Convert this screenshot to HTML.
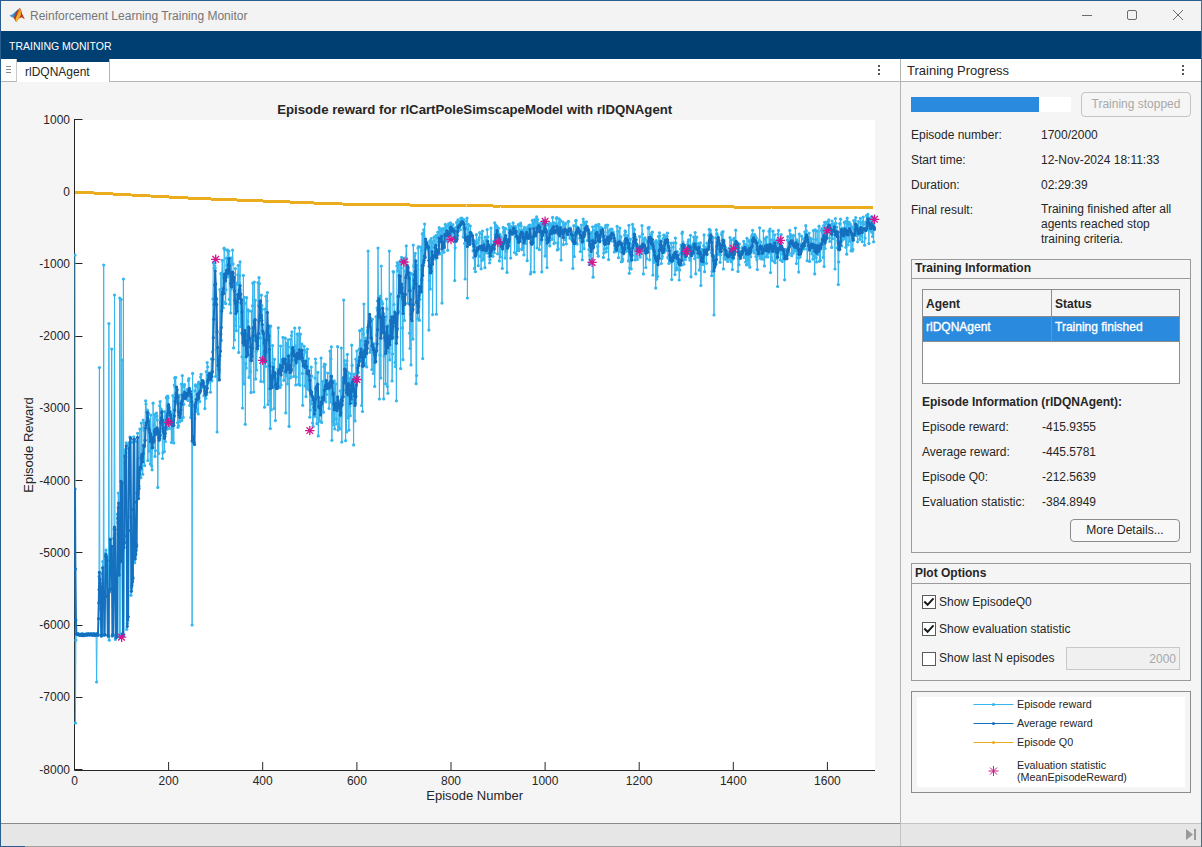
<!DOCTYPE html>
<html><head><meta charset="utf-8">
<style>
*{box-sizing:border-box;margin:0;padding:0}
html,body{width:1202px;height:847px;overflow:hidden;background:#f5f5f5;font-family:"Liberation Sans",sans-serif;color:#262626}
.a{position:absolute}
.t{position:absolute;white-space:nowrap;font-size:12px;line-height:14px}
.b{font-weight:bold}
</style></head><body>
<!-- window frame -->
<div class="a" style="left:0;top:0;width:1202px;height:847px;background:#f5f5f5"></div>
<div class="a" style="left:0;top:0;width:1201px;height:31px;background:#f3f3f3"></div>
<div class="a" style="left:0;top:0;width:1201px;height:1px;background:#2a5d8f"></div>
<div class="a" style="left:1201px;top:0;width:1px;height:847px;background:#4a6a8a"></div>
<!-- matlab icon -->
<svg class="a" style="left:5px;top:3px" width="30" height="25" viewBox="5 3 30 25">
<defs><linearGradient id="gb" x1="0" y1="1" x2="1" y2="0"><stop offset="0" stop-color="#4aa8ec"/><stop offset="1" stop-color="#1d5c9c"/></linearGradient>
<linearGradient id="go" x1="0" y1="0" x2="0" y2="1"><stop offset="0" stop-color="#e8902e"/><stop offset="1" stop-color="#f6c02a"/></linearGradient></defs>
<path d="M9.4 15.7 L13 14 L18.6 8.8 L17.5 13 L14.5 18.4 Z" fill="url(#gb)"/>
<path d="M13.8 18.3 L15.5 13.5 L19.6 7.9 L20.8 9 L22 13.5 L24.8 19.2 L21.5 17.2 L19 18.5 L16.2 21.9 Z" fill="#b8381c"/>
<path d="M19.6 7.9 L20.8 9.5 L21 15 L18.5 19 L16.2 21.9 L15.5 19 L17.5 14 Z" fill="url(#go)"/>
</svg>
<div class="t" style="left:30px;top:9px;color:#767676;font-size:12px">Reinforcement Learning Training Monitor</div>
<!-- window buttons -->
<div class="a" style="left:1082px;top:15px;width:10px;height:1px;background:#6b6b6b"></div>
<div class="a" style="left:1127px;top:10px;width:10px;height:10px;border:1px solid #6b6b6b;border-radius:2px"></div>
<svg class="a" style="left:1172px;top:9px" width="12" height="12" viewBox="0 0 12 12"><path d="M1 1L11 11M11 1L1 11" stroke="#6b6b6b" stroke-width="1"/></svg>
<!-- blue band -->
<div class="a" style="left:0;top:31px;width:1201px;height:28px;background:#003f72"></div>
<div class="t" style="left:9px;top:40px;color:#fff;font-size:10.5px;line-height:12px">TRAINING MONITOR</div>
<div class="a" style="left:0;top:0;width:1px;height:847px;background:#2a5d8f"></div>

<!-- left doc tab bar -->
<div class="a" style="left:1px;top:59px;width:899px;height:23px;background:#fff;border-bottom:1px solid #b4b4b4"></div>
<div class="a" style="left:1px;top:59px;width:16px;height:23px;background:#fff;border-right:1px solid #c8c8c8;border-bottom:1px solid #b4b4b4"></div>
<div class="a" style="left:6px;top:66px;width:5px;height:1px;background:#888"></div>
<div class="a" style="left:6px;top:69px;width:5px;height:1px;background:#888"></div>
<div class="a" style="left:6px;top:72px;width:5px;height:1px;background:#888"></div>
<div class="a" style="left:17px;top:59px;width:93px;height:23px;background:#fff;border-right:1px solid #b4b4b4"></div>
<div class="a" style="left:17px;top:59px;width:92px;height:3px;background:#003f72"></div>
<div class="t" style="left:25px;top:65px;font-size:12px">rlDQNAgent</div>
<div class="a" style="left:878px;top:65px;width:2px;height:2px;background:#555"></div>
<div class="a" style="left:878px;top:69px;width:2px;height:2px;background:#555"></div>
<div class="a" style="left:878px;top:73px;width:2px;height:2px;background:#555"></div>

<svg width="900" height="823" viewBox="0 0 900 823" style="position:absolute;left:0;top:0">
<defs>
<marker id="ml" markerUnits="userSpaceOnUse" markerWidth="6" markerHeight="6" refX="3" refY="3"><circle cx="3" cy="3" r="1.6" fill="#36b6ee"/></marker>
<marker id="md" markerUnits="userSpaceOnUse" markerWidth="6" markerHeight="6" refX="3" refY="3"><circle cx="3" cy="3" r="1.6" fill="#1570bf"/></marker>
<clipPath id="cp"><rect x="74" y="119" width="802" height="652"/></clipPath>
</defs>
<rect x="74.5" y="120" width="800.5" height="650" fill="#fff"/>

<g stroke="#262626" stroke-width="1" fill="none"><path d="M74.5 119V770.5H875"/><path d="M74.5 119.5h8" /><path d="M74.5 191.5h8" /><path d="M74.5 263.5h8" /><path d="M74.5 336.5h8" /><path d="M74.5 408.5h8" /><path d="M74.5 480.5h8" /><path d="M74.5 552.5h8" /><path d="M74.5 625.5h8" /><path d="M74.5 697.5h8" /><path d="M74.5 769.5h8" /><path d="M74.5 770v-8" /><path d="M168.6 770v-8" /><path d="M262.7 770v-8" /><path d="M356.9 770v-8" /><path d="M451.0 770v-8" /><path d="M545.1 770v-8" /><path d="M639.2 770v-8" /><path d="M733.3 770v-8" /><path d="M827.4 770v-8" /></g>
<g clip-path="url(#cp)" fill="none" stroke-linejoin="round">
<path d="M75.0 255.0 L75.4 723.0 L75.9 640.0 L76.4 634.0 L76.9 634.0 L77.3 634.4 L77.8 633.6 L78.3 635.1 L78.7 634.7 L79.2 634.7 L79.7 635.2 L80.1 635.4 L80.6 635.0 L81.1 634.2 L81.6 633.8 L82.0 634.0 L82.5 633.6 L83.0 635.4 L83.4 634.4 L83.9 634.6 L84.4 634.6 L84.9 635.6 L85.3 634.2 L85.8 635.1 L86.3 634.7 L86.7 634.4 L87.2 633.5 L87.7 635.0 L88.1 634.1 L88.6 634.3 L89.1 634.6 L89.6 634.6 L90.0 635.1 L90.5 634.2 L91.0 634.6 L91.4 634.7 L91.9 634.5 L92.4 634.9 L92.9 634.4 L93.3 635.1 L93.8 634.2 L94.3 633.8 L94.7 634.5 L95.2 635.1 L95.7 634.3 L96.1 634.2 L96.6 682.0 L97.1 634.6 L97.6 634.4 L98.0 634.7 L98.5 602.8 L99.0 576.7 L99.4 367.5 L99.9 590.4 L100.4 583.2 L100.9 635.0 L101.3 636.3 L101.8 634.8 L102.3 573.8 L102.7 561.5 L103.2 635.0 L103.7 265.0 L104.1 635.4 L104.6 634.3 L105.1 553.5 L105.6 558.8 L106.0 550.1 L106.5 563.4 L107.0 557.6 L107.4 635.0 L107.9 635.2 L108.4 637.0 L108.9 323.6 L109.3 640.2 L109.8 538.9 L110.3 540.2 L110.7 558.4 L111.2 552.1 L111.7 349.0 L112.1 636.2 L112.6 634.6 L113.1 634.9 L113.6 547.9 L114.0 529.0 L114.5 295.0 L115.0 533.9 L115.4 639.4 L115.9 636.3 L116.4 637.2 L116.9 635.7 L117.3 514.1 L117.8 522.6 L118.3 493.0 L118.7 513.0 L119.2 637.1 L119.7 298.0 L120.1 634.5 L120.6 488.7 L121.1 299.5 L121.6 499.0 L122.0 360.0 L122.5 634.8 L123.0 636.3 L123.4 279.0 L123.9 634.6 L124.4 450.4 L124.9 461.7 L125.3 465.2 L125.8 449.0 L126.3 442.8 L126.7 629.3 L127.2 623.6 L127.7 616.5 L128.1 617.0 L128.6 444.1 L129.1 452.8 L129.6 447.4 L130.0 437.0 L130.5 438.9 L131.0 595.3 L131.4 587.3 L131.9 583.7 L132.4 579.6 L132.9 577.1 L133.3 442.4 L133.8 436.8 L134.3 441.4 L134.7 562.7 L135.2 555.6 L135.7 553.4 L136.1 547.5 L136.6 544.3 L137.1 441.6 L137.6 433.3 L138.0 471.8 L138.5 486.9 L139.0 486.2 L139.4 458.7 L139.9 429.1 L140.4 470.1 L140.9 477.7 L141.3 423.0 L141.8 469.6 L142.3 456.9 L142.7 474.3 L143.2 420.0 L143.7 428.0 L144.1 430.4 L144.6 465.6 L145.1 423.1 L145.6 400.8 L146.0 404.1 L146.5 412.1 L147.0 423.7 L147.4 410.1 L147.9 460.5 L148.4 413.2 L148.9 451.2 L149.3 422.3 L149.8 438.4 L150.3 464.1 L150.7 415.1 L151.2 434.7 L151.7 466.1 L152.1 469.8 L152.6 436.1 L153.1 403.2 L153.6 442.0 L154.0 424.9 L154.5 414.4 L155.0 456.4 L155.4 450.5 L155.9 417.0 L156.4 413.2 L156.9 416.1 L157.3 420.0 L157.8 487.4 L158.3 434.9 L158.7 453.5 L159.2 429.4 L159.7 405.9 L160.1 401.6 L160.6 408.5 L161.1 409.4 L161.6 421.2 L162.0 423.3 L162.5 458.5 L163.0 452.7 L163.4 422.6 L163.9 420.9 L164.4 451.5 L164.9 411.7 L165.3 441.6 L165.8 417.3 L166.3 397.8 L166.7 396.9 L167.2 429.2 L167.7 396.1 L168.1 397.9 L168.6 410.2 L169.1 416.0 L169.6 428.3 L170.0 421.5 L170.5 417.2 L171.0 419.1 L171.4 442.5 L171.9 414.2 L172.4 439.9 L172.9 395.7 L173.3 418.1 L173.8 443.0 L174.3 385.1 L174.7 377.9 L175.2 387.1 L175.7 377.4 L176.1 392.8 L176.6 402.2 L177.1 401.2 L177.6 422.6 L178.0 427.3 L178.5 425.5 L179.0 412.1 L179.4 395.3 L179.9 421.8 L180.4 401.0 L180.9 403.0 L181.3 384.1 L181.8 420.4 L182.3 375.6 L182.7 384.9 L183.2 417.4 L183.7 404.2 L184.1 386.6 L184.6 384.7 L185.1 397.5 L185.6 398.9 L186.0 393.7 L186.5 398.3 L187.0 389.5 L187.4 393.8 L187.9 400.5 L188.4 380.6 L188.9 378.6 L189.3 388.3 L189.8 405.4 L190.3 394.5 L190.7 417.6 L191.2 396.8 L191.7 406.5 L192.1 625.0 L192.6 373.4 L193.1 414.3 L193.6 432.6 L194.0 404.2 L194.5 418.3 L195.0 390.8 L195.4 384.9 L195.9 386.3 L196.4 411.5 L196.9 409.4 L197.3 386.1 L197.8 384.5 L198.3 413.9 L198.7 382.2 L199.2 384.0 L199.7 401.7 L200.1 384.9 L200.6 377.0 L201.1 374.3 L201.6 383.5 L202.0 382.2 L202.5 381.4 L203.0 387.7 L203.4 387.1 L203.9 395.7 L204.4 386.1 L204.9 408.6 L205.3 394.5 L205.8 398.3 L206.3 371.5 L206.7 394.5 L207.2 362.6 L207.7 366.9 L208.1 382.9 L208.6 373.4 L209.1 373.3 L209.6 380.6 L210.0 373.9 L210.5 392.2 L211.0 372.4 L211.4 358.9 L211.9 380.8 L212.4 351.9 L212.9 299.1 L213.3 263.0 L213.8 262.3 L214.3 268.3 L214.7 265.5 L215.2 267.9 L215.7 376.4 L216.1 350.1 L216.6 299.1 L217.1 432.0 L217.6 360.0 L218.0 375.0 L218.5 380.0 L219.0 372.0 L219.4 360.0 L219.9 289.6 L220.4 329.5 L220.9 273.7 L221.3 340.3 L221.8 273.4 L222.3 260.3 L222.7 276.1 L223.2 307.9 L223.7 302.2 L224.1 248.2 L224.6 249.4 L225.1 273.4 L225.6 303.7 L226.0 289.8 L226.5 258.2 L227.0 265.3 L227.4 249.9 L227.9 250.9 L228.4 276.2 L228.9 251.0 L229.3 299.4 L229.8 304.2 L230.3 258.1 L230.7 313.0 L231.2 289.1 L231.7 258.0 L232.1 264.0 L232.6 250.1 L233.1 264.0 L233.6 347.9 L234.0 280.1 L234.5 340.0 L235.0 319.3 L235.4 268.5 L235.9 325.7 L236.4 330.7 L236.9 283.2 L237.3 284.3 L237.8 274.8 L238.3 265.3 L238.7 352.4 L239.2 283.0 L239.7 275.7 L240.1 261.8 L240.6 326.7 L241.1 318.4 L241.6 332.9 L242.0 356.8 L242.5 408.1 L243.0 313.6 L243.4 275.4 L243.9 383.9 L244.4 297.4 L244.9 303.4 L245.3 424.3 L245.8 363.6 L246.3 368.1 L246.7 297.7 L247.2 353.4 L247.7 321.4 L248.1 309.9 L248.6 311.2 L249.1 377.4 L249.6 356.0 L250.0 354.8 L250.5 371.5 L251.0 392.6 L251.4 311.0 L251.9 352.8 L252.4 305.8 L252.9 283.2 L253.3 320.6 L253.8 392.0 L254.3 282.0 L254.7 339.6 L255.2 300.2 L255.7 379.1 L256.1 351.6 L256.6 370.0 L257.1 349.1 L257.6 342.5 L258.0 282.5 L258.5 305.3 L259.0 277.6 L259.4 283.7 L259.9 317.8 L260.4 337.9 L260.9 381.4 L261.3 295.2 L261.8 305.7 L262.3 309.4 L262.7 357.3 L263.2 353.0 L263.7 381.8 L264.1 351.1 L264.6 407.2 L265.1 309.1 L265.6 366.5 L266.0 296.2 L266.5 309.3 L267.0 301.1 L267.4 292.5 L267.9 404.5 L268.4 352.1 L268.9 356.7 L269.3 388.8 L269.8 400.7 L270.3 428.6 L270.7 326.2 L271.2 409.9 L271.7 371.2 L272.1 386.9 L272.6 345.5 L273.1 363.1 L273.6 379.4 L274.0 408.6 L274.5 359.4 L275.0 380.2 L275.4 420.6 L275.9 374.2 L276.4 387.9 L276.9 378.6 L277.3 388.0 L277.8 369.1 L278.3 327.8 L278.7 387.6 L279.2 379.3 L279.7 364.4 L280.1 387.4 L280.6 346.1 L281.1 385.0 L281.6 361.4 L282.0 360.8 L282.5 364.6 L283.0 337.3 L283.4 358.4 L283.9 380.3 L284.4 371.3 L284.9 370.3 L285.3 338.1 L285.8 412.9 L286.3 345.2 L286.7 376.0 L287.2 343.1 L287.7 384.0 L288.1 339.8 L288.6 347.0 L289.1 426.4 L289.6 378.3 L290.0 360.8 L290.5 339.3 L291.0 377.3 L291.4 335.6 L291.9 331.9 L292.4 347.4 L292.9 355.0 L293.3 360.1 L293.8 376.3 L294.3 365.6 L294.7 328.0 L295.2 346.1 L295.7 385.0 L296.1 377.0 L296.6 349.3 L297.1 334.1 L297.6 361.3 L298.0 334.1 L298.5 384.4 L299.0 357.3 L299.4 327.8 L299.9 385.2 L300.4 334.2 L300.9 359.2 L301.3 350.5 L301.8 344.2 L302.3 373.4 L302.7 405.3 L303.2 362.9 L303.7 354.5 L304.1 346.3 L304.6 350.2 L305.1 385.9 L305.6 366.3 L306.0 396.6 L306.5 352.3 L307.0 388.6 L307.4 349.0 L307.9 386.2 L308.4 358.8 L308.9 389.8 L309.3 380.7 L309.8 417.2 L310.3 409.9 L310.7 401.3 L311.2 367.1 L311.7 376.2 L312.1 403.8 L312.6 423.0 L313.1 426.4 L313.6 398.9 L314.0 415.9 L314.5 416.4 L315.0 378.1 L315.4 359.0 L315.9 363.0 L316.4 390.5 L316.9 423.7 L317.3 396.6 L317.8 372.4 L318.3 435.9 L318.7 418.1 L319.2 398.6 L319.7 421.2 L320.1 404.1 L320.6 411.6 L321.1 358.0 L321.6 422.4 L322.0 405.9 L322.5 381.5 L323.0 411.5 L323.4 412.3 L323.9 366.7 L324.4 364.0 L324.9 398.2 L325.3 364.5 L325.8 401.8 L326.3 387.6 L326.7 394.5 L327.2 383.7 L327.7 373.0 L328.1 385.2 L328.6 383.8 L329.1 408.5 L329.6 390.0 L330.0 351.1 L330.5 402.1 L331.0 358.9 L331.4 346.8 L331.9 440.3 L332.4 397.4 L332.9 421.8 L333.3 392.9 L333.8 425.0 L334.3 380.9 L334.7 428.9 L335.2 407.8 L335.7 383.9 L336.1 419.1 L336.6 424.0 L337.1 399.7 L337.6 346.7 L338.0 430.1 L338.5 426.5 L339.0 405.4 L339.4 409.0 L339.9 428.8 L340.4 390.8 L340.9 416.1 L341.3 348.1 L341.8 442.1 L342.3 379.8 L342.7 404.5 L343.2 390.3 L343.7 300.0 L344.1 381.1 L344.6 360.6 L345.1 378.2 L345.6 440.7 L346.0 364.4 L346.5 431.9 L347.0 360.9 L347.4 354.4 L347.9 417.9 L348.4 372.7 L348.9 430.2 L349.3 378.2 L349.8 406.3 L350.3 415.7 L350.7 374.0 L351.2 389.5 L351.7 345.2 L352.1 365.4 L352.6 402.9 L353.1 400.6 L353.6 444.9 L354.0 374.2 L354.5 389.1 L355.0 420.9 L355.4 390.1 L355.9 359.2 L356.4 378.1 L356.9 351.1 L357.3 367.1 L357.8 362.2 L358.3 372.4 L358.7 362.6 L359.2 349.4 L359.7 330.7 L360.1 361.5 L360.6 340.7 L361.1 348.9 L361.6 405.5 L362.0 329.2 L362.5 411.5 L363.0 361.0 L363.4 334.1 L363.9 304.0 L364.4 363.2 L364.9 365.7 L365.3 341.6 L365.8 338.0 L366.3 345.8 L366.7 366.9 L367.2 331.9 L367.7 329.7 L368.1 251.0 L368.6 324.3 L369.1 322.2 L369.6 327.3 L370.0 352.3 L370.5 350.6 L371.0 348.8 L371.4 327.9 L371.9 369.6 L372.4 319.3 L372.9 359.7 L373.3 373.5 L373.8 343.7 L374.3 348.2 L374.7 386.4 L375.2 361.7 L375.7 354.4 L376.1 316.7 L376.6 335.3 L377.1 308.1 L377.6 300.9 L378.0 248.0 L378.5 297.2 L379.0 303.7 L379.4 399.0 L379.9 354.9 L380.4 296.2 L380.9 378.0 L381.3 266.0 L381.8 301.4 L382.3 303.5 L382.7 303.8 L383.2 329.3 L383.7 398.9 L384.1 355.9 L384.6 332.2 L385.1 320.0 L385.6 383.9 L386.0 316.9 L386.5 299.0 L387.0 308.9 L387.4 386.5 L387.9 393.3 L388.4 325.7 L388.9 352.5 L389.3 251.0 L389.8 359.9 L390.3 339.0 L390.7 294.0 L391.2 332.3 L391.7 325.0 L392.1 381.0 L392.6 354.0 L393.1 271.6 L393.6 272.0 L394.0 304.5 L394.5 311.7 L395.0 362.6 L395.4 366.6 L395.9 313.7 L396.4 400.8 L396.9 266.0 L397.3 262.6 L397.8 270.9 L398.3 264.7 L398.7 311.6 L399.2 277.1 L399.7 271.9 L400.1 261.1 L400.6 368.6 L401.1 268.1 L401.6 257.3 L402.0 299.1 L402.5 327.9 L403.0 359.7 L403.4 259.7 L403.9 261.4 L404.4 320.4 L404.9 294.2 L405.3 271.2 L405.8 257.8 L406.3 245.9 L406.7 258.8 L407.2 265.4 L407.7 303.2 L408.1 274.6 L408.6 288.7 L409.1 279.5 L409.6 333.2 L410.0 348.5 L410.5 273.2 L411.0 364.9 L411.4 314.0 L411.9 290.6 L412.4 274.2 L412.9 339.1 L413.3 245.0 L413.8 265.7 L414.3 267.2 L414.7 255.7 L415.2 253.3 L415.7 278.7 L416.1 383.7 L416.6 375.6 L417.1 265.4 L417.6 318.6 L418.0 248.0 L418.5 246.7 L419.0 319.8 L419.4 320.3 L419.9 299.3 L420.4 292.9 L420.9 247.1 L421.3 269.6 L421.8 250.3 L422.3 233.8 L422.7 358.6 L423.2 233.4 L423.7 229.9 L424.1 255.1 L424.6 224.1 L425.1 243.6 L425.6 248.8 L426.0 249.0 L426.5 247.0 L427.0 244.4 L427.4 247.8 L427.9 245.0 L428.4 249.1 L428.9 330.1 L429.3 280.7 L429.8 240.8 L430.3 289.1 L430.7 247.9 L431.2 238.5 L431.7 251.6 L432.1 242.8 L432.6 314.6 L433.1 247.5 L433.6 240.8 L434.0 237.0 L434.5 255.1 L435.0 244.3 L435.4 259.0 L435.9 235.7 L436.4 314.2 L436.9 238.1 L437.3 235.5 L437.8 232.2 L438.3 241.9 L438.7 252.6 L439.2 227.7 L439.7 254.1 L440.1 229.9 L440.6 242.0 L441.1 235.1 L441.6 229.0 L442.0 303.1 L442.5 229.9 L443.0 228.7 L443.4 229.8 L443.9 252.3 L444.4 241.3 L444.9 228.1 L445.3 224.4 L445.8 228.0 L446.3 238.7 L446.7 226.0 L447.2 241.0 L447.7 250.3 L448.1 230.4 L448.6 223.8 L449.1 226.4 L449.6 235.9 L450.0 228.3 L450.5 222.9 L451.0 225.2 L451.4 231.7 L451.9 239.6 L452.4 232.4 L452.9 224.6 L453.3 232.1 L453.8 229.0 L454.3 228.6 L454.7 280.6 L455.2 247.8 L455.7 227.7 L456.1 233.4 L456.6 222.6 L457.1 222.1 L457.6 235.8 L458.0 219.9 L458.5 230.6 L459.0 224.5 L459.4 221.8 L459.9 221.5 L460.4 229.7 L460.9 218.3 L461.3 222.1 L461.8 218.0 L462.3 222.6 L462.7 221.4 L463.2 237.1 L463.7 219.6 L464.1 227.3 L464.6 243.4 L465.1 279.0 L465.6 234.7 L466.0 227.6 L466.5 221.2 L467.0 218.2 L467.4 298.0 L467.9 229.7 L468.4 224.4 L468.9 233.4 L469.3 240.6 L469.8 240.6 L470.3 226.0 L470.7 232.5 L471.2 233.5 L471.7 242.7 L472.1 236.9 L472.6 243.0 L473.1 250.7 L473.6 257.6 L474.0 246.8 L474.5 268.4 L475.0 241.4 L475.4 271.7 L475.9 243.9 L476.4 234.7 L476.9 242.5 L477.3 252.8 L477.8 250.8 L478.3 265.7 L478.7 239.8 L479.2 237.6 L479.7 232.7 L480.1 256.4 L480.6 247.6 L481.1 268.8 L481.6 234.1 L482.0 260.4 L482.5 231.0 L483.0 241.6 L483.4 259.4 L483.9 243.1 L484.4 252.8 L484.9 267.7 L485.3 237.2 L485.8 239.9 L486.3 252.7 L486.7 250.8 L487.2 229.6 L487.7 236.9 L488.1 253.2 L488.6 250.9 L489.1 256.5 L489.6 262.8 L490.0 259.5 L490.5 252.1 L491.0 228.0 L491.4 244.2 L491.9 249.2 L492.4 247.4 L492.9 256.3 L493.3 247.6 L493.8 241.2 L494.3 252.7 L494.7 222.9 L495.2 234.8 L495.7 225.1 L496.1 232.0 L496.6 242.8 L497.1 226.7 L497.6 253.9 L498.0 231.9 L498.5 228.3 L499.0 242.3 L499.4 260.9 L499.9 234.3 L500.4 257.0 L500.9 236.9 L501.3 246.2 L501.8 241.7 L502.3 268.4 L502.7 243.4 L503.2 227.4 L503.7 232.2 L504.1 238.5 L504.6 228.5 L505.1 258.1 L505.6 228.6 L506.0 251.3 L506.5 240.1 L507.0 272.4 L507.4 239.4 L507.9 246.7 L508.4 224.4 L508.9 229.6 L509.3 224.1 L509.8 231.9 L510.3 227.1 L510.7 258.1 L511.2 226.5 L511.7 227.6 L512.1 233.2 L512.6 231.3 L513.1 222.9 L513.6 227.7 L514.0 228.0 L514.5 252.5 L515.0 226.3 L515.4 229.3 L515.9 227.1 L516.4 254.3 L516.9 231.5 L517.3 250.1 L517.8 242.6 L518.3 224.7 L518.7 250.7 L519.2 248.8 L519.7 230.4 L520.1 225.6 L520.6 223.0 L521.1 225.7 L521.6 239.7 L522.0 249.7 L522.5 237.2 L523.0 247.6 L523.4 229.7 L523.9 254.9 L524.4 227.4 L524.9 234.6 L525.3 228.5 L525.8 229.6 L526.3 243.5 L526.7 230.2 L527.2 260.7 L527.7 227.0 L528.1 238.2 L528.6 228.9 L529.1 225.4 L529.6 229.3 L530.0 225.2 L530.5 274.0 L531.0 272.0 L531.4 237.3 L531.9 227.5 L532.4 220.4 L532.9 224.1 L533.3 239.2 L533.8 222.2 L534.3 272.1 L534.7 219.7 L535.2 226.3 L535.7 235.6 L536.1 222.2 L536.6 216.8 L537.1 248.0 L537.6 219.7 L538.0 224.4 L538.5 223.5 L539.0 224.2 L539.4 249.7 L539.9 224.1 L540.4 244.0 L540.9 225.4 L541.3 223.6 L541.8 271.9 L542.3 222.2 L542.7 224.9 L543.2 221.5 L543.7 229.9 L544.1 221.0 L544.6 222.0 L545.1 256.1 L545.6 223.7 L546.0 225.6 L546.5 243.9 L547.0 267.6 L547.4 240.9 L547.9 236.5 L548.4 231.3 L548.9 225.8 L549.3 223.7 L549.8 245.9 L550.3 240.0 L550.7 223.9 L551.2 224.1 L551.7 226.6 L552.1 239.3 L552.6 217.4 L553.1 231.3 L553.6 222.5 L554.0 243.6 L554.5 242.8 L555.0 230.6 L555.4 223.6 L555.9 225.2 L556.4 218.4 L556.9 217.7 L557.3 250.0 L557.8 242.9 L558.3 249.1 L558.7 223.7 L559.2 218.8 L559.7 231.9 L560.1 221.5 L560.6 220.5 L561.1 260.0 L561.6 232.3 L562.0 232.7 L562.5 233.9 L563.0 222.1 L563.4 244.7 L563.9 225.1 L564.4 225.4 L564.9 223.8 L565.3 239.8 L565.8 223.6 L566.3 243.8 L566.7 232.6 L567.2 234.6 L567.7 232.0 L568.1 221.5 L568.6 221.6 L569.1 231.1 L569.6 235.3 L570.0 238.2 L570.5 228.0 L571.0 232.2 L571.4 239.0 L571.9 236.3 L572.4 240.3 L572.9 268.4 L573.3 234.9 L573.8 225.7 L574.3 256.5 L574.7 233.2 L575.2 237.5 L575.7 221.0 L576.1 220.4 L576.6 226.6 L577.1 244.1 L577.6 228.2 L578.0 227.6 L578.5 233.8 L579.0 230.7 L579.4 228.9 L579.9 238.3 L580.4 251.5 L580.9 240.4 L581.3 225.1 L581.8 237.5 L582.3 259.8 L582.7 233.2 L583.2 219.0 L583.7 221.8 L584.1 248.7 L584.6 224.0 L585.1 224.2 L585.6 231.5 L586.0 228.9 L586.5 221.8 L587.0 227.6 L587.4 240.5 L587.9 228.8 L588.4 234.1 L588.9 249.7 L589.3 264.5 L589.8 255.5 L590.3 232.9 L590.7 246.6 L591.2 259.9 L591.7 232.5 L592.1 245.2 L592.6 226.8 L593.1 277.2 L593.6 241.0 L594.0 230.0 L594.5 238.5 L595.0 240.5 L595.4 226.8 L595.9 225.2 L596.4 237.0 L596.9 225.8 L597.3 253.1 L597.8 246.4 L598.3 256.2 L598.7 224.3 L599.2 230.3 L599.7 240.3 L600.1 227.1 L600.6 229.8 L601.1 234.0 L601.6 227.9 L602.0 228.9 L602.5 230.5 L603.0 241.0 L603.4 257.4 L603.9 253.0 L604.4 249.1 L604.9 235.6 L605.3 227.5 L605.8 225.3 L606.3 251.8 L606.7 248.2 L607.2 243.8 L607.7 225.0 L608.1 232.2 L608.6 259.6 L609.1 235.4 L609.6 236.1 L610.0 230.2 L610.5 229.4 L611.0 240.9 L611.4 234.3 L611.9 229.2 L612.4 237.9 L612.9 234.7 L613.3 232.1 L613.8 241.5 L614.3 252.0 L614.7 245.4 L615.2 250.1 L615.7 251.4 L616.1 250.0 L616.6 250.9 L617.1 226.4 L617.6 246.2 L618.0 231.2 L618.5 257.7 L619.0 249.6 L619.4 240.3 L619.9 228.0 L620.4 251.6 L620.9 236.7 L621.3 261.8 L621.8 244.2 L622.3 261.4 L622.7 259.4 L623.2 251.4 L623.7 243.3 L624.1 241.6 L624.6 234.9 L625.1 230.9 L625.6 232.0 L626.0 251.5 L626.5 240.3 L627.0 250.2 L627.4 235.5 L627.9 247.4 L628.4 260.9 L628.9 225.3 L629.3 273.3 L629.8 268.0 L630.3 239.2 L630.7 261.1 L631.2 268.9 L631.7 250.2 L632.1 244.3 L632.6 224.4 L633.1 227.9 L633.6 234.6 L634.0 244.3 L634.5 229.6 L635.0 259.9 L635.4 241.4 L635.9 249.6 L636.4 239.7 L636.9 256.1 L637.3 259.5 L637.8 248.3 L638.3 247.1 L638.7 245.5 L639.2 247.4 L639.7 236.7 L640.1 257.2 L640.6 254.1 L641.1 247.2 L641.6 251.1 L642.0 225.5 L642.5 234.2 L643.0 250.8 L643.4 273.9 L643.9 239.3 L644.4 247.9 L644.9 237.8 L645.3 252.5 L645.8 267.5 L646.3 251.6 L646.7 258.7 L647.2 240.2 L647.7 242.8 L648.1 227.9 L648.6 228.5 L649.1 227.4 L649.6 259.8 L650.0 246.7 L650.5 234.9 L651.0 242.6 L651.4 248.5 L651.9 232.6 L652.4 232.1 L652.9 275.1 L653.3 247.1 L653.8 262.4 L654.3 259.2 L654.7 255.7 L655.2 242.2 L655.7 288.1 L656.1 240.7 L656.6 279.2 L657.1 242.5 L657.6 276.5 L658.0 261.2 L658.5 236.3 L659.0 254.6 L659.4 232.8 L659.9 236.0 L660.4 245.6 L660.9 242.1 L661.3 263.5 L661.8 258.5 L662.3 256.4 L662.7 250.5 L663.2 238.7 L663.7 235.1 L664.1 252.6 L664.6 235.4 L665.1 241.6 L665.6 236.9 L666.0 250.5 L666.5 239.5 L667.0 236.4 L667.4 233.2 L667.9 257.5 L668.4 258.2 L668.9 263.5 L669.3 256.2 L669.8 262.3 L670.3 261.9 L670.7 259.9 L671.2 243.2 L671.7 279.6 L672.1 260.8 L672.6 256.6 L673.1 247.1 L673.6 242.8 L674.0 259.0 L674.5 254.7 L675.0 274.6 L675.4 238.1 L675.9 243.0 L676.4 270.0 L676.9 267.9 L677.3 251.7 L677.8 261.4 L678.3 261.2 L678.7 262.9 L679.2 280.0 L679.7 269.9 L680.1 253.8 L680.6 248.9 L681.1 245.0 L681.6 265.1 L682.0 233.4 L682.5 232.0 L683.0 242.1 L683.4 252.1 L683.9 264.3 L684.4 248.6 L684.9 259.4 L685.3 259.4 L685.8 254.3 L686.3 250.3 L686.7 251.3 L687.2 248.8 L687.7 244.4 L688.1 241.8 L688.6 239.9 L689.1 249.6 L689.6 258.1 L690.0 260.2 L690.5 235.3 L691.0 276.8 L691.4 254.0 L691.9 245.9 L692.4 246.0 L692.9 252.0 L693.3 243.7 L693.8 237.1 L694.3 240.7 L694.7 258.7 L695.2 232.5 L695.7 273.9 L696.1 248.6 L696.6 237.2 L697.1 246.5 L697.6 254.1 L698.0 257.3 L698.5 243.6 L699.0 243.7 L699.4 270.2 L699.9 257.1 L700.4 242.8 L700.9 285.5 L701.3 264.1 L701.8 249.4 L702.3 256.4 L702.7 250.0 L703.2 264.6 L703.7 245.7 L704.1 234.9 L704.6 271.7 L705.1 247.3 L705.6 249.1 L706.0 251.6 L706.5 263.3 L707.0 243.3 L707.4 243.1 L707.9 247.4 L708.4 248.0 L708.9 235.4 L709.3 229.3 L709.8 234.2 L710.3 230.4 L710.7 233.5 L711.2 252.8 L711.7 275.7 L712.1 271.4 L712.6 269.9 L713.1 237.6 L713.6 255.6 L714.0 315.0 L714.5 256.3 L715.0 262.2 L715.4 256.7 L715.9 237.8 L716.4 229.8 L716.9 233.6 L717.3 234.8 L717.8 240.3 L718.3 248.3 L718.7 254.3 L719.2 245.8 L719.7 244.4 L720.1 262.3 L720.6 254.8 L721.1 245.6 L721.6 234.6 L722.0 232.4 L722.5 242.6 L723.0 231.7 L723.4 268.9 L723.9 240.1 L724.4 258.4 L724.9 254.8 L725.3 247.3 L725.8 259.5 L726.3 250.2 L726.7 257.6 L727.2 258.9 L727.7 261.4 L728.1 254.9 L728.6 256.6 L729.1 248.3 L729.6 253.1 L730.0 237.5 L730.5 259.4 L731.0 261.7 L731.4 240.1 L731.9 259.4 L732.4 269.5 L732.9 255.9 L733.3 258.8 L733.8 238.7 L734.3 244.0 L734.7 238.0 L735.2 252.4 L735.7 230.2 L736.1 245.2 L736.6 248.3 L737.1 246.5 L737.6 243.0 L738.0 271.4 L738.5 259.1 L739.0 264.8 L739.4 244.1 L739.9 256.2 L740.4 254.3 L740.9 255.3 L741.3 251.7 L741.8 248.0 L742.3 254.7 L742.7 247.2 L743.2 247.6 L743.7 241.4 L744.1 257.6 L744.6 246.3 L745.1 244.4 L745.6 262.0 L746.0 249.4 L746.5 264.9 L747.0 238.3 L747.4 261.0 L747.9 246.1 L748.4 264.3 L748.9 240.8 L749.3 240.8 L749.8 267.2 L750.3 241.5 L750.7 256.7 L751.2 239.4 L751.7 236.9 L752.1 234.9 L752.6 230.3 L753.1 250.6 L753.6 235.6 L754.0 252.9 L754.5 234.3 L755.0 237.0 L755.4 236.0 L755.9 256.7 L756.4 238.0 L756.9 259.6 L757.3 269.6 L757.8 242.7 L758.3 255.5 L758.7 253.2 L759.2 240.3 L759.7 227.8 L760.1 258.1 L760.6 242.2 L761.1 256.0 L761.6 259.1 L762.0 256.4 L762.5 248.6 L763.0 245.3 L763.4 230.8 L763.9 259.1 L764.4 265.9 L764.9 238.9 L765.3 238.7 L765.8 244.6 L766.3 256.7 L766.7 237.0 L767.2 254.2 L767.7 256.9 L768.1 250.5 L768.6 253.0 L769.1 231.3 L769.6 244.9 L770.0 229.1 L770.5 272.6 L771.0 239.9 L771.4 257.4 L771.9 260.3 L772.4 246.3 L772.9 231.2 L773.3 244.6 L773.8 240.3 L774.3 261.7 L774.7 234.8 L775.2 262.7 L775.7 254.5 L776.1 241.4 L776.6 258.3 L777.1 239.8 L777.6 286.5 L778.0 234.1 L778.5 230.4 L779.0 250.0 L779.4 247.9 L779.9 244.2 L780.4 260.0 L780.9 243.9 L781.3 234.5 L781.8 248.1 L782.3 261.4 L782.7 254.2 L783.2 252.4 L783.7 251.2 L784.1 254.1 L784.6 279.8 L785.1 250.3 L785.6 249.4 L786.0 257.6 L786.5 259.0 L787.0 255.1 L787.4 240.0 L787.9 236.5 L788.4 254.8 L788.9 241.3 L789.3 253.2 L789.8 230.4 L790.3 242.2 L790.7 234.6 L791.2 245.6 L791.7 255.7 L792.1 236.4 L792.6 243.8 L793.1 253.2 L793.6 235.4 L794.0 250.7 L794.5 248.6 L795.0 251.0 L795.4 228.0 L795.9 242.3 L796.4 263.5 L796.9 239.9 L797.3 251.1 L797.8 241.5 L798.3 257.9 L798.7 272.1 L799.2 234.0 L799.7 254.4 L800.1 257.1 L800.6 249.1 L801.1 244.3 L801.6 236.2 L802.0 250.1 L802.5 244.8 L803.0 247.1 L803.4 238.9 L803.9 245.5 L804.4 248.9 L804.9 231.8 L805.3 234.1 L805.8 225.7 L806.3 230.9 L806.7 237.4 L807.2 260.7 L807.7 248.6 L808.1 249.6 L808.6 246.5 L809.1 233.1 L809.6 261.4 L810.0 250.5 L810.5 238.2 L811.0 241.9 L811.4 239.2 L811.9 253.9 L812.4 245.3 L812.9 259.1 L813.3 230.6 L813.8 243.3 L814.3 255.8 L814.7 273.9 L815.2 229.9 L815.7 239.3 L816.1 257.8 L816.6 262.0 L817.1 231.1 L817.6 254.4 L818.0 251.8 L818.5 250.9 L819.0 226.2 L819.4 261.3 L819.9 243.6 L820.4 260.3 L820.9 243.4 L821.3 230.5 L821.8 228.7 L822.3 232.5 L822.7 238.3 L823.2 257.4 L823.7 225.7 L824.1 266.5 L824.6 222.3 L825.1 248.5 L825.6 222.4 L826.0 236.3 L826.5 235.9 L827.0 227.8 L827.4 221.9 L827.9 224.2 L828.4 221.6 L828.9 219.8 L829.3 238.0 L829.8 241.5 L830.3 225.7 L830.7 228.9 L831.2 224.5 L831.7 247.4 L832.1 221.0 L832.6 238.7 L833.1 224.5 L833.6 227.8 L834.0 225.8 L834.5 223.5 L835.0 269.0 L835.4 218.5 L835.9 223.3 L836.4 234.3 L836.9 227.0 L837.3 247.8 L837.8 240.5 L838.3 284.6 L838.7 261.9 L839.2 236.8 L839.7 223.5 L840.1 224.0 L840.6 219.2 L841.1 229.0 L841.6 245.9 L842.0 240.8 L842.5 228.3 L843.0 239.4 L843.4 228.6 L843.9 232.1 L844.4 222.2 L844.9 222.8 L845.3 238.3 L845.8 247.3 L846.3 221.3 L846.7 254.2 L847.2 218.2 L847.7 223.7 L848.1 244.8 L848.6 222.0 L849.1 222.4 L849.6 241.4 L850.0 231.8 L850.5 224.4 L851.0 250.8 L851.4 229.0 L851.9 226.8 L852.4 250.9 L852.9 249.4 L853.3 234.6 L853.8 220.6 L854.3 221.9 L854.7 230.1 L855.2 220.5 L855.7 217.5 L856.1 235.4 L856.6 232.3 L857.1 234.7 L857.6 241.8 L858.0 235.2 L858.5 221.5 L859.0 233.0 L859.4 228.3 L859.9 239.3 L860.4 218.4 L860.9 223.3 L861.3 235.9 L861.8 236.0 L862.3 241.7 L862.7 221.7 L863.2 217.1 L863.7 224.5 L864.1 229.7 L864.6 245.2 L865.1 238.0 L865.6 222.1 L866.0 223.9 L866.5 215.6 L867.0 221.3 L867.4 216.3 L867.9 214.4 L868.4 224.3 L868.9 243.6 L869.3 224.8 L869.8 228.9 L870.3 218.1 L870.7 231.0 L871.2 224.0 L871.7 216.5 L872.1 232.4 L872.6 236.6 L873.1 217.3 L873.6 241.8 L874.0 219.9 L874.5 227.6" stroke="#36b6ee" stroke-width="1" marker-start="url(#ml)" marker-mid="url(#ml)" marker-end="url(#ml)"/>
<path d="M75.0 489.0 L75.4 569.0 L75.9 620.0 L76.4 634.0 L76.9 634.0 L77.3 634.5 L77.8 634.1 L78.3 634.3 L78.7 634.0 L79.2 634.4 L79.7 634.5 L80.1 635.1 L80.6 635.1 L81.1 634.8 L81.6 634.9 L82.0 634.6 L82.5 635.6 L83.0 635.1 L83.4 635.6 L83.9 634.7 L84.4 634.7 L84.9 634.9 L85.3 634.6 L85.8 634.6 L86.3 634.1 L86.7 634.9 L87.2 634.6 L87.7 634.8 L88.1 634.4 L88.6 633.8 L89.1 634.7 L89.6 635.0 L90.0 634.0 L90.5 634.1 L91.0 634.4 L91.4 634.4 L91.9 633.8 L92.4 635.2 L92.9 634.9 L93.3 634.3 L93.8 633.8 L94.3 634.6 L94.7 635.3 L95.2 634.8 L95.7 635.0 L96.1 634.1 L96.6 634.6 L97.1 633.9 L97.6 635.3 L98.0 634.7 L98.5 618.7 L99.0 589.8 L99.4 572.3 L99.9 579.2 L100.4 586.8 L100.9 609.1 L101.3 635.6 L101.8 635.6 L102.3 604.3 L102.7 567.7 L103.2 598.3 L103.7 592.5 L104.1 592.7 L104.6 634.8 L105.1 593.9 L105.6 556.1 L106.0 554.4 L106.5 556.7 L107.0 560.5 L107.4 596.3 L107.9 635.1 L108.4 636.1 L108.9 590.5 L109.3 592.0 L109.8 589.6 L110.3 539.6 L110.7 549.3 L111.2 555.3 L111.7 546.3 L112.1 588.4 L112.6 635.4 L113.1 634.7 L113.6 591.4 L114.0 538.5 L114.5 527.0 L115.0 529.5 L115.4 586.7 L115.9 637.8 L116.4 636.8 L116.9 636.5 L117.3 574.9 L117.8 518.4 L118.3 507.8 L118.7 503.0 L119.2 575.1 L119.7 561.6 L120.1 560.2 L120.6 561.6 L121.1 481.4 L121.6 486.5 L122.0 483.2 L122.5 551.2 L123.0 635.6 L123.4 548.2 L123.9 547.3 L124.4 542.5 L124.9 456.0 L125.3 463.4 L125.8 457.1 L126.3 445.9 L126.7 536.0 L127.2 626.4 L127.7 620.0 L128.1 616.8 L128.6 530.5 L129.1 448.4 L129.6 450.1 L130.0 442.2 L130.5 437.9 L131.0 517.1 L131.4 591.3 L131.9 585.5 L132.4 581.7 L132.9 578.3 L133.3 509.7 L133.8 439.6 L134.3 439.1 L134.7 502.1 L135.2 559.1 L135.7 554.5 L136.1 550.4 L136.6 545.9 L137.1 492.9 L137.6 437.4 L138.0 494.0 L138.5 498.6 L139.0 488.5 L139.4 473.5 L139.9 467.9 L140.4 467.1 L140.9 468.1 L141.3 457.5 L141.8 454.7 L142.3 454.4 L142.7 461.9 L143.2 453.6 L143.7 445.3 L144.1 446.5 L144.6 445.9 L145.1 440.2 L145.6 428.0 L146.0 425.3 L146.5 422.7 L147.0 421.6 L147.4 412.3 L147.9 418.6 L148.4 420.6 L148.9 428.5 L149.3 430.2 L149.8 432.6 L150.3 441.6 L150.7 434.1 L151.2 437.6 L151.7 440.1 L152.1 448.0 L152.6 447.6 L153.1 437.5 L153.6 442.0 L154.0 440.4 L154.5 431.7 L155.0 429.5 L155.4 431.9 L155.9 434.2 L156.4 429.4 L156.9 427.9 L157.3 428.9 L157.8 434.0 L158.3 431.4 L158.7 437.5 L159.2 440.2 L159.7 438.5 L160.1 435.4 L160.6 422.3 L161.1 418.0 L161.6 412.7 L162.0 411.7 L162.5 420.4 L163.0 428.9 L163.4 431.3 L163.9 433.2 L164.4 438.3 L164.9 436.3 L165.3 433.5 L165.8 427.6 L166.3 423.5 L166.7 419.5 L167.2 415.7 L167.7 413.1 L168.1 405.9 L168.6 404.7 L169.1 407.7 L169.6 412.9 L170.0 411.6 L170.5 415.2 L171.0 418.7 L171.4 424.1 L171.9 423.8 L172.4 425.7 L172.9 421.4 L173.3 421.6 L173.8 425.6 L174.3 416.0 L174.7 410.0 L175.2 401.2 L175.7 398.1 L176.1 393.9 L176.6 387.1 L177.1 389.8 L177.6 397.2 L178.0 403.9 L178.5 411.9 L179.0 415.2 L179.4 414.0 L179.9 417.4 L180.4 413.8 L180.9 409.8 L181.3 402.9 L181.8 404.3 L182.3 401.0 L182.7 394.8 L183.2 397.6 L183.7 397.8 L184.1 398.2 L184.6 392.2 L185.1 395.9 L185.6 398.2 L186.0 394.3 L186.5 393.3 L187.0 393.8 L187.4 395.3 L187.9 395.8 L188.4 392.7 L188.9 390.2 L189.3 388.6 L189.8 391.2 L190.3 391.3 L190.7 394.2 L191.2 396.9 L191.7 401.5 L192.1 441.0 L192.6 435.6 L193.1 438.9 L193.6 441.5 L194.0 442.7 L194.5 444.6 L195.0 405.6 L195.4 407.5 L195.9 402.9 L196.4 399.3 L196.9 400.2 L197.3 394.8 L197.8 393.8 L198.3 398.6 L198.7 397.9 L199.2 393.3 L199.7 392.1 L200.1 391.9 L200.6 390.6 L201.1 384.0 L201.6 384.2 L202.0 383.9 L202.5 380.6 L203.0 381.0 L203.4 382.7 L203.9 386.3 L204.4 386.7 L204.9 391.1 L205.3 393.3 L205.8 395.1 L206.3 392.5 L206.7 392.3 L207.2 388.3 L207.7 381.4 L208.1 379.5 L208.6 375.3 L209.1 375.6 L209.6 373.3 L210.0 375.2 L210.5 379.4 L211.0 377.6 L211.4 375.2 L211.9 376.5 L212.4 371.7 L212.9 359.2 L213.3 337.7 L213.8 319.3 L214.3 304.2 L214.7 285.0 L215.2 271.0 L215.7 283.9 L216.1 298.4 L216.6 304.6 L217.1 331.8 L217.6 347.6 L218.0 365.4 L218.5 366.0 L219.0 369.7 L219.4 379.8 L219.9 356.1 L220.4 351.0 L220.9 334.1 L221.3 327.5 L221.8 311.1 L222.3 294.5 L222.7 292.2 L223.2 288.6 L223.7 293.4 L224.1 278.1 L224.6 274.1 L225.1 276.2 L225.6 280.8 L226.0 277.8 L226.5 270.4 L227.0 273.3 L227.4 273.4 L227.9 269.6 L228.4 265.0 L228.9 258.6 L229.3 265.4 L229.8 271.9 L230.3 273.3 L230.7 283.6 L231.2 285.8 L231.7 287.0 L232.1 281.1 L232.6 272.0 L233.1 273.0 L233.6 278.8 L234.0 277.3 L234.5 291.0 L235.0 300.2 L235.4 303.3 L235.9 313.6 L236.4 310.7 L236.9 311.2 L237.3 301.9 L237.8 294.5 L238.3 294.0 L238.7 298.4 L239.2 290.5 L239.7 289.2 L240.1 285.5 L240.6 294.2 L241.1 303.0 L241.6 299.8 L242.0 312.0 L242.5 334.1 L243.0 342.7 L243.4 334.2 L243.9 345.1 L244.4 339.2 L244.9 330.3 L245.3 333.0 L245.8 341.3 L246.3 356.8 L246.7 342.4 L247.2 351.7 L247.7 354.7 L248.1 335.7 L248.6 326.9 L249.1 328.5 L249.6 338.2 L250.0 338.5 L250.5 346.8 L251.0 360.6 L251.4 360.6 L251.9 356.4 L252.4 348.1 L252.9 336.1 L253.3 327.7 L253.8 327.6 L254.3 322.7 L254.7 320.5 L255.2 319.6 L255.7 335.6 L256.1 340.7 L256.6 337.1 L257.1 348.3 L257.6 348.7 L258.0 345.8 L258.5 333.5 L259.0 321.1 L259.4 306.8 L259.9 301.6 L260.4 300.8 L260.9 317.3 L261.3 315.6 L261.8 320.3 L262.3 324.6 L262.7 331.2 L263.2 333.7 L263.7 333.7 L264.1 343.0 L264.6 360.0 L265.1 359.9 L265.6 361.5 L266.0 352.0 L266.5 339.9 L267.0 331.6 L267.4 312.4 L267.9 328.3 L268.4 325.9 L268.9 336.0 L269.3 349.3 L269.8 365.9 L270.3 388.6 L270.7 375.5 L271.2 385.1 L271.7 387.6 L272.1 387.3 L272.6 378.1 L273.1 367.1 L273.6 376.0 L274.0 375.8 L274.5 373.8 L275.0 372.7 L275.4 385.2 L275.9 387.1 L276.4 388.5 L276.9 383.5 L277.3 388.3 L277.8 386.4 L278.3 370.9 L278.7 373.2 L279.2 371.7 L279.7 369.4 L280.1 369.3 L280.6 365.5 L281.1 375.0 L281.6 370.6 L282.0 367.5 L282.5 367.5 L283.0 359.2 L283.4 361.2 L283.9 360.5 L284.4 362.1 L284.9 363.7 L285.3 359.3 L285.8 371.9 L286.3 369.7 L286.7 369.0 L287.2 364.3 L287.7 366.6 L288.1 366.8 L288.6 355.9 L289.1 369.4 L289.6 369.8 L290.0 372.7 L290.5 365.3 L291.0 371.5 L291.4 369.6 L291.9 353.9 L292.4 348.7 L292.9 347.7 L293.3 351.2 L293.8 351.1 L294.3 356.1 L294.7 355.4 L295.2 355.2 L295.7 360.2 L296.1 363.0 L296.6 358.5 L297.1 353.3 L297.6 358.8 L298.0 356.8 L298.5 356.7 L299.0 353.4 L299.4 349.8 L299.9 358.3 L300.4 353.8 L300.9 358.0 L301.3 352.3 L301.8 350.2 L302.3 357.8 L302.7 361.1 L303.2 365.9 L303.7 365.1 L304.1 364.5 L304.6 365.5 L305.1 367.5 L305.6 361.0 L306.0 366.6 L306.5 366.3 L307.0 373.3 L307.4 373.1 L307.9 373.2 L308.4 371.9 L308.9 370.8 L309.3 375.5 L309.8 380.3 L310.3 390.4 L310.7 392.9 L311.2 394.3 L311.7 392.1 L312.1 395.9 L312.6 396.9 L313.1 399.6 L313.6 399.2 L314.0 407.4 L314.5 414.1 L315.0 409.8 L315.4 399.1 L315.9 388.5 L316.4 387.1 L316.9 388.4 L317.3 385.2 L317.8 384.2 L318.3 397.0 L318.7 406.2 L319.2 407.6 L319.7 407.1 L320.1 408.4 L320.6 414.9 L321.1 401.9 L321.6 402.6 L322.0 403.8 L322.5 397.2 L323.0 398.5 L323.4 398.6 L323.9 400.0 L324.4 390.3 L324.9 389.0 L325.3 386.2 L325.8 384.6 L326.3 380.5 L326.7 385.1 L327.2 388.4 L327.7 384.2 L328.1 387.6 L328.6 384.6 L329.1 388.1 L329.6 387.4 L330.0 381.9 L330.5 386.8 L331.0 382.4 L331.4 376.2 L331.9 381.5 L332.4 382.8 L332.9 394.6 L333.3 393.0 L333.8 404.0 L334.3 409.7 L334.7 407.8 L335.2 409.6 L335.7 403.2 L336.1 407.6 L336.6 407.4 L337.1 410.6 L337.6 396.9 L338.0 400.6 L338.5 407.7 L339.0 405.4 L339.4 402.9 L339.9 407.8 L340.4 415.1 L340.9 412.8 L341.3 399.7 L341.8 405.8 L342.3 400.9 L342.7 396.9 L343.2 396.8 L343.7 377.4 L344.1 382.9 L344.6 369.4 L345.1 369.1 L345.6 375.1 L346.0 370.8 L346.5 392.8 L347.0 389.4 L347.4 388.4 L347.9 395.0 L348.4 383.7 L348.9 394.7 L349.3 385.7 L349.8 393.3 L350.3 403.5 L350.7 396.2 L351.2 399.0 L351.7 384.8 L352.1 382.7 L352.6 382.1 L353.1 379.6 L353.6 391.4 L354.0 388.9 L354.5 396.2 L355.0 405.4 L355.4 403.3 L355.9 396.4 L356.4 385.3 L356.9 381.4 L357.3 377.7 L357.8 368.0 L358.3 365.0 L358.7 365.6 L359.2 360.8 L359.7 357.4 L360.1 356.5 L360.6 352.9 L361.1 349.0 L361.6 356.1 L362.0 352.7 L362.5 366.2 L363.0 366.1 L363.4 365.0 L363.9 357.5 L364.4 350.5 L364.9 356.6 L365.3 344.9 L365.8 341.1 L366.3 343.0 L366.7 353.5 L367.2 348.3 L367.7 342.3 L368.1 327.2 L368.6 324.9 L369.1 321.0 L369.6 314.4 L370.0 317.8 L370.5 321.3 L371.0 337.6 L371.4 338.2 L371.9 346.1 L372.4 344.7 L372.9 346.0 L373.3 349.8 L373.8 348.9 L374.3 352.3 L374.7 355.1 L375.2 362.2 L375.7 361.3 L376.1 351.9 L376.6 350.5 L377.1 343.8 L377.6 329.5 L378.0 310.6 L378.5 301.1 L379.0 298.9 L379.4 309.5 L379.9 317.3 L380.4 316.5 L380.9 338.2 L381.3 333.0 L381.8 332.6 L382.3 316.7 L382.7 308.2 L383.2 313.7 L383.7 317.1 L384.1 332.1 L384.6 337.3 L385.1 340.0 L385.6 353.4 L386.0 351.3 L386.5 334.7 L387.0 326.8 L387.4 335.9 L387.9 348.1 L388.4 338.4 L388.9 344.3 L389.3 336.3 L389.8 344.8 L390.3 336.9 L390.7 320.4 L391.2 321.5 L391.7 316.9 L392.1 338.5 L392.6 337.6 L393.1 326.3 L393.6 322.7 L394.0 318.0 L394.5 315.8 L395.0 312.7 L395.4 314.8 L395.9 321.8 L396.4 343.3 L396.9 336.9 L397.3 328.7 L397.8 313.4 L398.3 296.4 L398.7 296.1 L399.2 275.5 L399.7 276.4 L400.1 276.2 L400.6 292.5 L401.1 293.1 L401.6 284.0 L402.0 287.7 L402.5 297.0 L403.0 313.5 L403.4 295.3 L403.9 294.2 L404.4 304.7 L404.9 303.9 L405.3 294.4 L405.8 277.4 L406.3 275.1 L406.7 274.7 L407.2 265.5 L407.7 267.0 L408.1 267.6 L408.6 272.8 L409.1 278.4 L409.6 290.8 L410.0 304.6 L410.5 299.6 L411.0 314.7 L411.4 318.9 L411.9 320.7 L412.4 310.9 L412.9 309.3 L413.3 304.6 L413.8 288.1 L414.3 280.3 L414.7 274.5 L415.2 271.0 L415.7 260.9 L416.1 284.1 L416.6 302.4 L417.1 302.1 L417.6 312.6 L418.0 311.7 L418.5 306.4 L419.0 295.7 L419.4 286.5 L419.9 292.1 L420.4 287.9 L420.9 287.7 L421.3 291.5 L421.8 279.9 L422.3 265.5 L422.7 275.4 L423.2 265.5 L423.7 262.6 L424.1 260.2 L424.6 255.8 L425.1 257.4 L425.6 239.1 L426.0 241.8 L426.5 244.6 L427.0 242.8 L427.4 246.8 L427.9 247.0 L428.4 247.1 L428.9 260.6 L429.3 266.2 L429.8 265.6 L430.3 272.5 L430.7 272.9 L431.2 271.2 L431.7 258.1 L432.1 251.8 L432.6 264.1 L433.1 257.1 L433.6 256.0 L434.0 255.7 L434.5 256.3 L435.0 256.5 L435.4 247.3 L435.9 245.3 L436.4 257.5 L436.9 257.7 L437.3 254.5 L437.8 252.4 L438.3 249.6 L438.7 252.4 L439.2 238.0 L439.7 240.7 L440.1 239.7 L440.6 241.4 L441.1 240.3 L441.6 236.3 L442.0 248.9 L442.5 244.9 L443.0 244.6 L443.4 242.6 L443.9 245.5 L444.4 247.5 L444.9 235.0 L445.3 234.1 L445.8 234.0 L446.3 235.5 L446.7 231.1 L447.2 231.1 L447.7 234.8 L448.1 235.8 L448.6 235.1 L449.1 233.0 L449.6 234.6 L450.0 232.5 L450.5 227.9 L451.0 227.1 L451.4 228.4 L451.9 230.6 L452.4 230.0 L452.9 229.4 L453.3 230.9 L453.8 231.5 L454.3 231.0 L454.7 237.9 L455.2 240.5 L455.7 241.0 L456.1 241.2 L456.6 240.1 L457.1 239.0 L457.6 231.6 L458.0 226.9 L458.5 227.4 L459.0 225.9 L459.4 225.8 L459.9 225.7 L460.4 224.7 L460.9 224.4 L461.3 223.0 L461.8 221.9 L462.3 222.0 L462.7 222.0 L463.2 223.3 L463.7 223.5 L464.1 224.3 L464.6 228.6 L465.1 238.0 L465.6 240.2 L466.0 238.6 L466.5 238.9 L467.0 237.4 L467.4 246.5 L467.9 238.2 L468.4 236.5 L468.9 237.5 L469.3 240.7 L469.8 244.5 L470.3 232.5 L470.7 232.9 L471.2 234.4 L471.7 236.0 L472.1 235.4 L472.6 235.8 L473.1 239.9 L473.6 244.1 L474.0 246.3 L474.5 250.6 L475.0 251.3 L475.4 256.1 L475.9 255.0 L476.4 251.2 L476.9 250.5 L477.3 247.8 L477.8 249.4 L478.3 248.4 L478.7 247.7 L479.2 248.2 L479.7 246.6 L480.1 247.2 L480.6 246.6 L481.1 247.2 L481.6 246.2 L482.0 250.0 L482.5 249.7 L483.0 247.3 L483.4 249.2 L483.9 244.9 L484.4 248.0 L484.9 249.3 L485.3 250.3 L485.8 250.0 L486.3 248.9 L486.7 250.2 L487.2 246.3 L487.7 241.2 L488.1 243.9 L488.6 245.7 L489.1 246.3 L489.6 248.3 L490.0 253.3 L490.5 255.9 L491.0 251.6 L491.4 250.5 L491.9 249.3 L492.4 246.7 L492.9 246.2 L493.3 245.4 L493.8 247.6 L494.3 249.1 L494.7 244.7 L495.2 242.6 L495.7 237.4 L496.1 234.8 L496.6 235.0 L497.1 230.7 L497.6 235.9 L498.0 235.4 L498.5 235.9 L499.0 237.7 L499.4 240.7 L499.9 241.9 L500.4 242.5 L500.9 243.3 L501.3 246.3 L501.8 246.2 L502.3 247.4 L502.7 248.9 L503.2 244.0 L503.7 243.2 L504.1 241.9 L504.6 239.7 L505.1 238.0 L505.6 235.6 L506.0 239.5 L506.5 240.8 L507.0 246.5 L507.4 248.3 L507.9 246.4 L508.4 245.7 L508.9 242.1 L509.3 239.4 L509.8 232.7 L510.3 230.6 L510.7 232.5 L511.2 232.9 L511.7 232.6 L512.1 234.1 L512.6 234.0 L513.1 233.3 L513.6 228.2 L514.0 228.5 L514.5 232.6 L515.0 231.5 L515.4 231.1 L515.9 231.8 L516.4 236.3 L516.9 236.8 L517.3 236.4 L517.8 239.1 L518.3 238.4 L518.7 242.3 L519.2 241.4 L519.7 241.2 L520.1 237.1 L520.6 233.8 L521.1 234.0 L521.6 232.2 L522.0 232.3 L522.5 233.5 L523.0 237.1 L523.4 238.3 L523.9 243.1 L524.4 241.1 L524.9 238.6 L525.3 237.1 L525.8 234.1 L526.3 236.4 L526.7 232.3 L527.2 237.9 L527.7 236.6 L528.1 238.2 L528.6 238.1 L529.1 235.1 L529.6 234.9 L530.0 229.0 L530.5 236.9 L531.0 242.5 L531.4 243.9 L531.9 244.2 L532.4 242.8 L532.9 242.6 L533.3 236.8 L533.8 228.5 L534.3 234.3 L534.7 233.0 L535.2 234.0 L535.7 235.9 L536.1 233.0 L536.6 232.1 L537.1 228.1 L537.6 228.1 L538.0 227.8 L538.5 225.8 L539.0 226.1 L539.4 231.6 L539.9 227.6 L540.4 231.6 L540.9 231.8 L541.3 231.8 L541.8 239.8 L542.3 235.2 L542.7 235.3 L543.2 231.6 L543.7 232.3 L544.1 231.9 L544.6 223.6 L545.1 229.2 L545.6 229.0 L546.0 229.7 L546.5 232.1 L547.0 239.8 L547.4 243.0 L547.9 239.7 L548.4 241.0 L548.9 241.0 L549.3 237.6 L549.8 234.0 L550.3 233.9 L550.7 231.8 L551.2 230.6 L551.7 230.7 L552.1 233.3 L552.6 228.6 L553.1 227.1 L553.6 226.9 L554.0 230.1 L554.5 232.8 L555.0 231.4 L555.4 232.4 L555.9 231.4 L556.4 230.7 L556.9 226.4 L557.3 227.6 L557.8 229.6 L558.3 233.9 L558.7 233.6 L559.2 233.7 L559.7 236.0 L560.1 231.3 L560.6 227.6 L561.1 229.4 L561.6 230.8 L562.0 233.1 L562.5 233.5 L563.0 233.6 L563.4 237.6 L563.9 231.8 L564.4 230.6 L564.9 229.2 L565.3 230.2 L565.8 230.4 L566.3 230.3 L566.7 231.5 L567.2 233.1 L567.7 234.4 L568.1 231.4 L568.6 231.0 L569.1 228.9 L569.6 229.3 L570.0 229.9 L570.5 229.3 L571.0 231.1 L571.4 234.0 L571.9 234.8 L572.4 235.6 L572.9 240.7 L573.3 241.8 L573.8 240.8 L574.3 243.7 L574.7 243.2 L575.2 242.7 L575.7 234.8 L576.1 232.4 L576.6 232.6 L577.1 230.5 L577.6 229.7 L578.0 228.0 L578.5 230.1 L579.0 231.9 L579.4 232.2 L579.9 231.3 L580.4 235.1 L580.9 237.3 L581.3 235.8 L581.8 237.0 L582.3 242.1 L582.7 241.3 L583.2 235.8 L583.7 232.7 L584.1 236.6 L584.6 234.4 L585.1 228.5 L585.6 228.2 L586.0 229.8 L586.5 229.8 L587.0 226.3 L587.4 229.1 L587.9 229.8 L588.4 230.2 L588.9 233.7 L589.3 240.9 L589.8 245.5 L590.3 244.2 L590.7 247.2 L591.2 251.5 L591.7 248.6 L592.1 245.4 L592.6 240.6 L593.1 248.0 L593.6 247.1 L594.0 242.1 L594.5 243.1 L595.0 242.3 L595.4 242.3 L595.9 233.7 L596.4 233.0 L596.9 232.3 L597.3 234.7 L597.8 235.7 L598.3 240.6 L598.7 240.5 L599.2 239.3 L599.7 241.8 L600.1 237.4 L600.6 234.6 L601.1 230.9 L601.6 231.6 L602.0 231.3 L602.5 229.7 L603.0 232.0 L603.4 236.6 L603.9 239.8 L604.4 243.3 L604.9 244.4 L605.3 243.9 L605.8 241.3 L606.3 240.4 L606.7 239.6 L607.2 238.7 L607.7 237.0 L608.1 237.7 L608.6 243.5 L609.1 240.7 L609.6 238.7 L610.0 236.4 L610.5 237.2 L611.0 238.6 L611.4 234.4 L611.9 233.4 L612.4 233.7 L612.9 234.4 L613.3 234.8 L613.8 235.0 L614.3 237.9 L614.7 240.6 L615.2 242.6 L615.7 245.4 L616.1 248.4 L616.6 250.0 L617.1 245.7 L617.6 245.8 L618.0 242.7 L618.5 243.7 L619.0 243.7 L619.4 241.9 L619.9 242.2 L620.4 243.1 L620.9 244.0 L621.3 244.7 L621.8 243.8 L622.3 247.3 L622.7 252.5 L623.2 252.5 L623.7 253.6 L624.1 250.2 L624.6 248.7 L625.1 243.6 L625.6 239.0 L626.0 239.0 L626.5 238.5 L627.0 240.0 L627.4 240.1 L627.9 242.8 L628.4 247.6 L628.9 243.3 L629.3 248.8 L629.8 251.7 L630.3 252.4 L630.7 254.6 L631.2 256.0 L631.7 260.1 L632.1 255.3 L632.6 248.0 L633.1 246.1 L633.6 241.7 L634.0 237.6 L634.5 234.2 L635.0 236.8 L635.4 239.6 L635.9 243.2 L636.4 244.1 L636.9 246.0 L637.3 251.0 L637.8 249.1 L638.3 250.1 L638.7 249.4 L639.2 250.6 L639.7 247.4 L640.1 247.0 L640.6 248.0 L641.1 248.0 L641.6 248.9 L642.0 245.3 L642.5 244.9 L643.0 243.8 L643.4 247.1 L643.9 245.8 L644.4 245.2 L644.9 247.3 L645.3 250.4 L645.8 253.1 L646.3 249.4 L646.7 252.7 L647.2 251.4 L647.7 252.2 L648.1 248.1 L648.6 241.6 L649.1 237.6 L649.6 237.8 L650.0 238.9 L650.5 237.6 L651.0 240.0 L651.4 243.3 L651.9 244.2 L652.4 239.6 L652.9 244.3 L653.3 246.3 L653.8 249.6 L654.3 251.4 L654.7 255.3 L655.2 256.9 L655.7 259.1 L656.1 258.0 L656.6 260.8 L657.1 258.1 L657.6 261.5 L658.0 264.7 L658.5 256.1 L659.0 258.4 L659.4 250.6 L659.9 249.6 L660.4 244.4 L660.9 241.2 L661.3 245.8 L661.8 246.4 L662.3 250.4 L662.7 252.8 L663.2 251.6 L663.7 250.4 L664.1 248.6 L664.6 244.8 L665.1 242.3 L665.6 240.0 L666.0 242.0 L666.5 242.7 L667.0 240.0 L667.4 239.7 L667.9 242.3 L668.4 245.9 L668.9 248.0 L669.3 250.8 L669.8 255.1 L670.3 259.9 L670.7 260.3 L671.2 257.8 L671.7 260.5 L672.1 261.3 L672.6 260.3 L673.1 257.9 L673.6 255.0 L674.0 257.6 L674.5 253.5 L675.0 255.8 L675.4 252.7 L675.9 252.0 L676.4 256.6 L676.9 258.1 L677.3 257.6 L677.8 255.3 L678.3 259.2 L678.7 262.5 L679.2 264.2 L679.7 264.5 L680.1 264.9 L680.6 262.8 L681.1 260.1 L681.6 260.5 L682.0 252.7 L682.5 246.4 L683.0 244.4 L683.4 244.9 L683.9 248.2 L684.4 245.4 L684.9 249.8 L685.3 254.3 L685.8 256.4 L686.3 256.1 L686.7 253.9 L687.2 253.9 L687.7 251.4 L688.1 248.5 L688.6 246.1 L689.1 246.0 L689.6 247.1 L690.0 249.0 L690.5 247.5 L691.0 253.3 L691.4 255.7 L691.9 255.1 L692.4 253.0 L692.9 251.7 L693.3 253.1 L693.8 246.4 L694.3 244.2 L694.7 246.4 L695.2 244.1 L695.7 247.8 L696.1 248.6 L696.6 248.6 L697.1 249.6 L697.6 248.8 L698.0 252.9 L698.5 247.9 L699.0 247.1 L699.4 252.6 L699.9 254.3 L700.4 252.4 L700.9 257.2 L701.3 260.6 L701.8 261.5 L702.3 259.2 L702.7 258.0 L703.2 261.7 L703.7 255.0 L704.1 250.2 L704.6 253.9 L705.1 252.4 L705.6 252.2 L706.0 250.0 L706.5 253.0 L707.0 254.4 L707.4 249.6 L707.9 249.6 L708.4 249.4 L708.9 246.7 L709.3 241.1 L709.8 239.6 L710.3 237.4 L710.7 235.1 L711.2 235.9 L711.7 242.6 L712.1 249.7 L712.6 255.6 L713.1 256.8 L713.6 260.5 L714.0 270.8 L714.5 267.6 L715.0 266.1 L715.4 263.9 L715.9 264.0 L716.4 259.6 L716.9 246.1 L717.3 242.5 L717.8 238.8 L718.3 237.4 L718.7 240.2 L719.2 242.9 L719.7 244.6 L720.1 249.2 L720.6 251.7 L721.1 251.2 L721.6 247.9 L722.0 245.7 L722.5 245.4 L723.0 240.3 L723.4 242.7 L723.9 241.7 L724.4 245.7 L724.9 249.4 L725.3 250.2 L725.8 254.8 L726.3 251.7 L726.7 254.6 L727.2 254.7 L727.7 255.8 L728.1 257.1 L728.6 256.6 L729.1 256.3 L729.6 255.5 L730.0 251.9 L730.5 251.6 L731.0 252.7 L731.4 250.0 L731.9 251.9 L732.4 254.6 L732.9 257.7 L733.3 257.6 L733.8 253.7 L734.3 254.4 L734.7 250.8 L735.2 248.0 L735.7 243.7 L736.1 241.4 L736.6 243.0 L737.1 243.4 L737.6 244.3 L738.0 247.4 L738.5 252.3 L739.0 255.5 L739.4 254.8 L739.9 256.4 L740.4 258.3 L740.9 255.6 L741.3 254.4 L741.8 251.6 L742.3 253.4 L742.7 251.9 L743.2 250.8 L743.7 248.4 L744.1 249.4 L744.6 249.1 L745.1 247.4 L745.6 249.9 L746.0 250.2 L746.5 254.1 L747.0 250.9 L747.4 253.3 L747.9 253.6 L748.4 254.0 L748.9 252.6 L749.3 248.6 L749.8 253.4 L750.3 250.1 L750.7 251.9 L751.2 247.7 L751.7 247.1 L752.1 246.1 L752.6 240.0 L753.1 241.5 L753.6 237.9 L754.0 240.2 L754.5 239.8 L755.0 240.1 L755.4 241.0 L755.9 242.1 L756.4 242.5 L756.9 243.6 L757.3 249.5 L757.8 250.4 L758.3 253.7 L758.7 253.1 L759.2 253.5 L759.7 248.2 L760.1 246.3 L760.6 246.2 L761.1 246.3 L761.6 247.3 L762.0 249.9 L762.5 253.4 L763.0 251.3 L763.4 249.4 L763.9 249.9 L764.4 251.0 L764.9 248.1 L765.3 246.4 L765.8 246.3 L766.3 250.6 L766.7 247.0 L767.2 245.0 L767.7 248.0 L768.1 250.0 L768.6 251.4 L769.1 247.1 L769.6 248.5 L770.0 244.3 L770.5 246.9 L771.0 245.1 L771.4 245.9 L771.9 250.7 L772.4 250.9 L772.9 251.3 L773.3 246.6 L773.8 246.7 L774.3 247.4 L774.7 243.1 L775.2 245.9 L775.7 249.8 L776.1 249.2 L776.6 252.2 L777.1 248.6 L777.6 257.2 L778.0 252.4 L778.5 248.4 L779.0 249.8 L779.4 248.1 L779.9 248.9 L780.4 244.4 L780.9 246.1 L781.3 246.8 L781.8 246.4 L782.3 248.7 L782.7 250.3 L783.2 249.1 L783.7 250.3 L784.1 253.6 L784.6 258.8 L785.1 257.0 L785.6 256.2 L786.0 257.1 L786.5 258.4 L787.0 258.5 L787.4 251.9 L787.9 249.6 L788.4 250.5 L788.9 247.8 L789.3 246.8 L789.8 242.7 L790.3 243.1 L790.7 242.7 L791.2 241.2 L791.7 243.6 L792.1 240.8 L792.6 243.0 L793.1 244.9 L793.6 245.0 L794.0 245.9 L794.5 244.7 L795.0 247.1 L795.4 244.5 L795.9 242.7 L796.4 247.4 L796.9 245.6 L797.3 246.0 L797.8 244.4 L798.3 249.4 L798.7 254.3 L799.2 249.4 L799.7 251.8 L800.1 252.8 L800.6 254.1 L801.1 251.8 L801.6 245.8 L802.0 248.5 L802.5 246.9 L803.0 245.3 L803.4 243.6 L803.9 243.8 L804.4 245.9 L804.9 242.8 L805.3 241.1 L805.8 237.5 L806.3 236.1 L806.7 234.8 L807.2 236.8 L807.7 239.6 L808.1 242.1 L808.6 245.6 L809.1 246.0 L809.6 250.0 L810.0 248.3 L810.5 246.5 L811.0 245.2 L811.4 244.0 L811.9 247.5 L812.4 244.8 L812.9 246.3 L813.3 245.0 L813.8 245.2 L814.3 248.0 L814.7 251.3 L815.2 248.8 L815.7 245.5 L816.1 250.0 L816.6 253.1 L817.1 249.0 L817.6 245.8 L818.0 249.4 L818.5 251.3 L819.0 246.1 L819.4 246.0 L819.9 248.0 L820.4 249.0 L820.9 247.6 L821.3 244.2 L821.8 244.6 L822.3 239.8 L822.7 239.0 L823.2 238.5 L823.7 235.5 L824.1 241.5 L824.6 240.5 L825.1 243.1 L825.6 240.5 L826.0 236.9 L826.5 238.6 L827.0 232.2 L827.4 232.1 L827.9 228.1 L828.4 227.9 L828.9 225.2 L829.3 225.6 L829.8 227.8 L830.3 228.5 L830.7 229.3 L831.2 229.7 L831.7 234.3 L832.1 231.5 L832.6 231.0 L833.1 230.8 L833.6 230.6 L834.0 230.9 L834.5 226.9 L835.0 234.9 L835.4 231.5 L835.9 231.3 L836.4 232.4 L836.9 232.6 L837.3 236.7 L837.8 231.9 L838.3 242.9 L838.7 249.3 L839.2 249.8 L839.7 249.2 L840.1 245.2 L840.6 241.7 L841.1 232.4 L841.6 229.7 L842.0 230.4 L842.5 231.2 L843.0 233.8 L843.4 235.3 L843.9 235.9 L844.4 231.9 L844.9 228.9 L845.3 230.6 L845.8 231.9 L846.3 230.7 L846.7 234.3 L847.2 233.7 L847.7 233.8 L848.1 234.9 L848.6 230.7 L849.1 230.9 L849.6 228.7 L850.0 231.0 L850.5 231.1 L851.0 232.1 L851.4 233.3 L851.9 234.0 L852.4 235.6 L852.9 238.5 L853.3 240.2 L853.8 235.2 L854.3 234.0 L854.7 234.6 L855.2 229.5 L855.7 224.2 L856.1 224.3 L856.6 226.3 L857.1 228.4 L857.6 230.4 L858.0 232.8 L858.5 233.5 L859.0 233.1 L859.4 232.4 L859.9 233.2 L860.4 229.3 L860.9 227.3 L861.3 229.7 L861.8 230.2 L862.3 232.5 L862.7 229.5 L863.2 229.3 L863.7 229.5 L864.1 228.5 L864.6 230.0 L865.1 229.4 L865.6 229.4 L866.0 230.6 L866.5 229.1 L867.0 227.7 L867.4 222.9 L867.9 218.9 L868.4 219.3 L868.9 222.6 L869.3 224.1 L869.8 225.4 L870.3 225.7 L870.7 228.4 L871.2 228.4 L871.7 223.9 L872.1 225.2 L872.6 226.4 L873.1 226.3 L873.6 228.1 L874.0 227.4 L874.5 229.3" stroke="#1570bf" stroke-width="2" marker-start="url(#md)" marker-mid="url(#md)" marker-end="url(#md)"/>
<path d="M75.0 192.0 L78.7 192.2 L82.5 192.4 L86.3 192.6 L90.0 192.8 L93.8 193.0 L97.6 193.2 L101.3 193.4 L105.1 193.6 L108.9 193.8 L112.6 194.0 L116.4 194.2 L120.1 194.4 L123.9 194.6 L127.7 194.8 L131.4 195.0 L135.2 195.2 L139.0 195.4 L142.7 195.6 L146.5 195.8 L150.3 196.0 L154.0 196.2 L157.8 196.4 L161.6 196.6 L165.3 196.8 L169.1 197.0 L172.9 197.2 L176.6 197.4 L180.4 197.6 L184.1 197.8 L187.9 198.0 L191.7 198.2 L195.4 198.4 L199.2 198.6 L203.0 198.7 L206.7 198.9 L210.5 199.0 L214.3 199.1 L218.0 199.3 L221.8 199.4 L225.6 199.6 L229.3 199.7 L233.1 199.9 L236.9 200.0 L240.6 200.2 L244.4 200.3 L248.1 200.4 L251.9 200.6 L255.7 200.7 L259.4 200.9 L263.2 201.0 L267.0 201.2 L270.7 201.3 L274.5 201.5 L278.3 201.6 L282.0 201.8 L285.8 201.9 L289.6 202.0 L293.3 202.2 L297.1 202.3 L300.9 202.5 L304.6 202.6 L308.4 202.8 L312.1 202.9 L315.9 203.1 L319.7 203.2 L323.4 203.3 L327.2 203.5 L331.0 203.6 L334.7 203.8 L338.5 203.9 L342.3 204.0 L346.0 204.1 L349.8 204.1 L353.6 204.2 L357.3 204.2 L361.1 204.3 L364.9 204.3 L368.6 204.4 L372.4 204.4 L376.1 204.5 L379.9 204.5 L383.7 204.6 L387.4 204.6 L391.2 204.7 L395.0 204.7 L398.7 204.8 L402.5 204.8 L406.3 204.9 L410.0 205.0 L413.8 205.0 L417.6 205.1 L421.3 205.1 L425.1 205.2 L428.9 205.2 L432.6 205.3 L436.4 205.3 L440.1 205.4 L443.9 205.4 L447.7 205.5 L451.4 205.5 L455.2 205.6 L459.0 205.6 L462.7 205.6 L466.5 205.7 L470.3 205.7 L474.0 205.8 L477.8 205.8 L481.6 205.8 L485.3 205.9 L489.1 205.9 L492.9 206.0 L496.6 206.0 L500.4 206.0 L504.1 206.1 L507.9 206.1 L511.7 206.1 L515.4 206.2 L519.2 206.2 L523.0 206.3 L526.7 206.3 L530.5 206.3 L534.3 206.4 L538.0 206.4 L541.8 206.5 L545.6 206.5 L549.3 206.5 L553.1 206.5 L556.9 206.5 L560.6 206.5 L564.4 206.5 L568.1 206.6 L571.9 206.6 L575.7 206.6 L579.4 206.6 L583.2 206.6 L587.0 206.6 L590.7 206.6 L594.5 206.6 L598.3 206.6 L602.0 206.6 L605.8 206.6 L609.6 206.7 L613.3 206.7 L617.1 206.7 L620.9 206.7 L624.6 206.7 L628.4 206.7 L632.1 206.7 L635.9 206.7 L639.7 206.7 L643.4 206.7 L647.2 206.7 L651.0 206.8 L654.7 206.8 L658.5 206.8 L662.3 206.8 L666.0 206.8 L669.8 206.8 L673.6 206.8 L677.3 206.8 L681.1 206.8 L684.9 206.8 L688.6 206.8 L692.4 206.9 L696.1 206.9 L699.9 206.9 L703.7 206.9 L707.4 206.9 L711.2 206.9 L715.0 206.9 L718.7 206.9 L722.5 206.9 L726.3 206.9 L730.0 206.9 L733.8 207.0 L737.6 207.0 L741.3 207.0 L745.1 207.0 L748.9 207.0 L752.6 207.0 L756.4 207.0 L760.1 207.0 L763.9 207.0 L767.7 207.0 L771.4 207.0 L775.2 207.1 L779.0 207.1 L782.7 207.1 L786.5 207.1 L790.3 207.1 L794.0 207.1 L797.8 207.1 L801.6 207.1 L805.3 207.1 L809.1 207.1 L812.9 207.2 L816.6 207.2 L820.4 207.2 L824.1 207.2 L827.9 207.2 L831.7 207.2 L835.4 207.2 L839.2 207.2 L843.0 207.2 L846.7 207.2 L850.5 207.2 L854.3 207.3 L858.0 207.3 L861.8 207.3 L865.6 207.3 L869.3 207.3 L873.1 207.3" stroke="#ebad1e" stroke-width="3" shape-rendering="crispEdges"/>
</g>
<path d="M116.9 637.2h9.4M121.6 632.5v9.4M118.2 633.9l6.6 6.6M118.2 640.5l6.6 -6.6M163.9 422.4h9.4M168.6 417.7v9.4M165.3 419.1l6.6 6.6M165.3 425.7l6.6 -6.6M211.0 259.3h9.4M215.7 254.6v9.4M212.4 256.0l6.6 6.6M212.4 262.6l6.6 -6.6M258.0 360.4h9.4M262.7 355.7v9.4M259.4 357.1l6.6 6.6M259.4 363.7l6.6 -6.6M305.1 430.6h9.4M309.8 425.9v9.4M306.5 427.3l6.6 6.6M306.5 433.9l6.6 -6.6M352.2 379.5h9.4M356.9 374.8v9.4M353.5 376.2l6.6 6.6M353.5 382.8l6.6 -6.6M399.2 262.0h9.4M403.9 257.3v9.4M400.6 258.7l6.6 6.6M400.6 265.3l6.6 -6.6M446.3 239.5h9.4M451.0 234.8v9.4M447.6 236.2l6.6 6.6M447.6 242.8l6.6 -6.6M493.3 242.0h9.4M498.0 237.3v9.4M494.7 238.7l6.6 6.6M494.7 245.3l6.6 -6.6M540.4 221.3h9.4M545.1 216.6v9.4M541.8 218.0l6.6 6.6M541.8 224.6l6.6 -6.6M587.4 262.4h9.4M592.1 257.7v9.4M588.8 259.1l6.6 6.6M588.8 265.7l6.6 -6.6M634.5 251.2h9.4M639.2 246.5v9.4M635.9 247.9l6.6 6.6M635.9 254.5l6.6 -6.6M681.6 251.3h9.4M686.3 246.6v9.4M682.9 248.0l6.6 6.6M682.9 254.6l6.6 -6.6M728.6 248.6h9.4M733.3 243.9v9.4M730.0 245.3l6.6 6.6M730.0 251.9l6.6 -6.6M775.7 240.3h9.4M780.4 235.6v9.4M777.1 237.0l6.6 6.6M777.1 243.6l6.6 -6.6M822.7 230.6h9.4M827.4 225.9v9.4M824.1 227.3l6.6 6.6M824.1 233.9l6.6 -6.6M869.8 219.3h9.4M874.5 214.6v9.4M871.2 216.0l6.6 6.6M871.2 222.6l6.6 -6.6" stroke="#d4168c" stroke-width="1.3" fill="none"/>
<g font-family="Liberation Sans" font-size="12" fill="#262626"><text x="70" y="123.5" text-anchor="end">1000</text><text x="70" y="195.7" text-anchor="end">0</text><text x="70" y="267.9" text-anchor="end">-1000</text><text x="70" y="340.2" text-anchor="end">-2000</text><text x="70" y="412.4" text-anchor="end">-3000</text><text x="70" y="484.6" text-anchor="end">-4000</text><text x="70" y="556.8" text-anchor="end">-5000</text><text x="70" y="629.1" text-anchor="end">-6000</text><text x="70" y="701.3" text-anchor="end">-7000</text><text x="70" y="773.5" text-anchor="end">-8000</text><text x="74.5" y="785" text-anchor="middle">0</text><text x="168.6" y="785" text-anchor="middle">200</text><text x="262.7" y="785" text-anchor="middle">400</text><text x="356.9" y="785" text-anchor="middle">600</text><text x="451.0" y="785" text-anchor="middle">800</text><text x="545.1" y="785" text-anchor="middle">1000</text><text x="639.2" y="785" text-anchor="middle">1200</text><text x="733.3" y="785" text-anchor="middle">1400</text><text x="827.4" y="785" text-anchor="middle">1600</text><text x="474.7" y="114" text-anchor="middle" font-size="13.2" font-weight="bold">Episode reward for rlCartPoleSimscapeModel with rlDQNAgent</text><text x="474.7" y="800" text-anchor="middle" font-size="13">Episode Number</text><text transform="translate(33,445) rotate(-90)" text-anchor="middle" font-size="13">Episode Reward</text></g>
</svg>

<!-- divider -->
<div class="a" style="left:900px;top:59px;width:1px;height:788px;background:#b4b4b4"></div>

<!-- right panel header -->
<div class="a" style="left:901px;top:59px;width:300px;height:23px;background:#fff;border-bottom:1px solid #b4b4b4"></div>
<div class="t" style="left:907px;top:63px;font-size:13px;line-height:16px">Training Progress</div>
<div class="a" style="left:1182px;top:65px;width:2px;height:2px;background:#555"></div>
<div class="a" style="left:1182px;top:69px;width:2px;height:2px;background:#555"></div>
<div class="a" style="left:1182px;top:73px;width:2px;height:2px;background:#555"></div>

<!-- progress -->
<div class="a" style="left:911px;top:97px;width:160px;height:15px;background:#fff"></div>
<div class="a" style="left:911px;top:97px;width:128px;height:15px;background:#2a8ade"></div>
<div class="a" style="left:1081px;top:92px;width:110px;height:25px;border:1px solid #c4c4c4;border-radius:4px;background:#f5f5f5"></div>
<div class="t" style="left:1081px;top:97px;width:110px;text-align:center;color:#a8a8a8">Training stopped</div>

<div class="t" style="left:911px;top:128px">Episode number:</div><div class="t" style="left:1041px;top:128px">1700/2000</div>
<div class="t" style="left:911px;top:153px">Start time:</div><div class="t" style="left:1041px;top:153px">12-Nov-2024 18:11:33</div>
<div class="t" style="left:911px;top:178px">Duration:</div><div class="t" style="left:1041px;top:178px">02:29:39</div>
<div class="t" style="left:911px;top:203px">Final result:</div>
<div class="t" style="left:1041px;top:202px;line-height:15px">Training finished after all<br>agents reached stop<br>training criteria.</div>

<!-- Training information panel -->
<div class="a" style="left:911px;top:259px;width:280px;height:294px;border:1px solid #9a9a9a"></div>
<div class="a" style="left:912px;top:278px;width:278px;height:1px;background:#9a9a9a"></div>
<div class="t b" style="left:915px;top:261px">Training Information</div>
<div class="a" style="left:922px;top:289px;width:258px;height:95px;border:1px solid #8c8c8c;background:#fff"></div>
<div class="a" style="left:923px;top:290px;width:256px;height:27px;background:#f5f5f5;border-bottom:1px solid #8c8c8c"></div>
<div class="a" style="left:923px;top:317px;width:256px;height:25px;background:#2a8ade;border-bottom:1px solid #8c8c8c"></div>
<div class="a" style="left:1051px;top:290px;width:1px;height:52px;background:#8c8c8c"></div>
<div class="t b" style="left:926px;top:297px">Agent</div>
<div class="t b" style="left:1055px;top:297px">Status</div>
<div class="t" style="left:926px;top:320px;color:#fff;-webkit-text-stroke:0.35px #fff">rlDQNAgent</div>
<div class="t" style="left:1055px;top:320px;color:#fff;-webkit-text-stroke:0.35px #fff">Training finished</div>

<div class="t b" style="left:922px;top:395px">Episode Information (rlDQNAgent):</div>
<div class="t" style="left:922px;top:420px">Episode reward:</div><div class="t" style="left:1042px;top:420px">-415.9355</div>
<div class="t" style="left:922px;top:445px">Average reward:</div><div class="t" style="left:1042px;top:445px">-445.5781</div>
<div class="t" style="left:922px;top:470px">Episode Q0:</div><div class="t" style="left:1042px;top:470px">-212.5639</div>
<div class="t" style="left:922px;top:495px">Evaluation statistic:</div><div class="t" style="left:1042px;top:495px">-384.8949</div>
<div class="a" style="left:1070px;top:519px;width:110px;height:23px;border:1px solid #8c8c8c;border-radius:4px;background:#f8f8f8"></div>
<div class="t" style="left:1070px;top:523px;width:110px;text-align:center">More Details...</div>

<!-- plot options -->
<div class="a" style="left:911px;top:563px;width:280px;height:118px;border:1px solid #9a9a9a"></div>
<div class="a" style="left:912px;top:583px;width:278px;height:1px;background:#9a9a9a"></div>
<div class="t b" style="left:915px;top:566px">Plot Options</div>
<div class="a" style="left:922px;top:595px;width:14px;height:14px;border:1px solid #5a5a5a;background:#fff"></div>
<svg class="a" style="left:922px;top:595px" width="14" height="14"><path d="M2.3 6.5L5.6 9.8L11.5 3.3" stroke="#1a1a1a" stroke-width="2" fill="none"/></svg>
<div class="t" style="left:939px;top:595px">Show EpisodeQ0</div>
<div class="a" style="left:922px;top:622px;width:14px;height:14px;border:1px solid #5a5a5a;background:#fff"></div>
<svg class="a" style="left:922px;top:622px" width="14" height="14"><path d="M2.3 6.5L5.6 9.8L11.5 3.3" stroke="#1a1a1a" stroke-width="2" fill="none"/></svg>
<div class="t" style="left:939px;top:622px">Show evaluation statistic</div>
<div class="a" style="left:922px;top:652px;width:14px;height:14px;border:1px solid #5a5a5a;background:#fff"></div>
<div class="t" style="left:939px;top:651px">Show last N episodes</div>
<div class="a" style="left:1066px;top:647px;width:114px;height:23px;border:1px solid #c8c8c8;background:#f0f0f0"></div>
<div class="t" style="left:1066px;top:652px;width:110px;text-align:right;color:#a8a8a8">2000</div>

<!-- legend -->
<div class="a" style="left:911px;top:691px;width:280px;height:102px;border:1px solid #8c8c8c"></div>
<div class="a" style="left:917px;top:697px;width:268px;height:90px;background:#fff"></div>
<svg class="a" style="left:917px;top:697px" width="268" height="90">
<path d="M56.5 7.5h40" stroke="#36b6ee" stroke-width="1"/><circle cx="76.5" cy="7.5" r="1.6" fill="#36b6ee"/>
<path d="M56.5 26.5h40" stroke="#1570bf" stroke-width="1"/><circle cx="76.5" cy="26.5" r="1.6" fill="#1570bf"/>
<path d="M56.5 45.5h40" stroke="#ebad1e" stroke-width="1"/><circle cx="76.5" cy="45.5" r="1.6" fill="#ebad1e"/>
<path d="M71.5 74h10M76.5 69v10M73 70.5l7 7M73 77.5l7 -7" stroke="#d4168c" stroke-width="1"/>
</svg>
<div class="t" style="left:1017px;top:698px;font-size:10.75px;line-height:13px">Episode reward</div>
<div class="t" style="left:1017px;top:717px;font-size:10.75px;line-height:13px">Average reward</div>
<div class="t" style="left:1017px;top:736px;font-size:10.75px;line-height:13px">Episode Q0</div>
<div class="t" style="left:1017px;top:759px;font-size:10.75px;line-height:12px">Evaluation statistic<br>(MeanEpisodeReward)</div>

<!-- status bar -->
<div class="a" style="left:1px;top:823px;width:1200px;height:23px;background:#e6e6e6"></div>
<div class="a" style="left:1px;top:823px;width:899px;height:1px;background:#8a8a8a"></div>
<div class="a" style="left:901px;top:823px;width:300px;height:1px;background:#c4c4c4"></div>
<div class="a" style="left:900px;top:823px;width:1px;height:23px;background:#c4c4c4"></div>
<svg class="a" style="left:1185px;top:828px" width="12" height="13"><path d="M1 1L8 6.5L1 12Z" fill="#9a9a9a"/><rect x="9" y="1" width="2" height="11" fill="#9a9a9a"/></svg>
<div class="a" style="left:1px;top:846px;width:1200px;height:1px;background:#a0a0a0"></div>
<div class="a" style="left:0;top:846px;width:25px;height:1px;background:#2a5d8f"></div>
</body></html>
